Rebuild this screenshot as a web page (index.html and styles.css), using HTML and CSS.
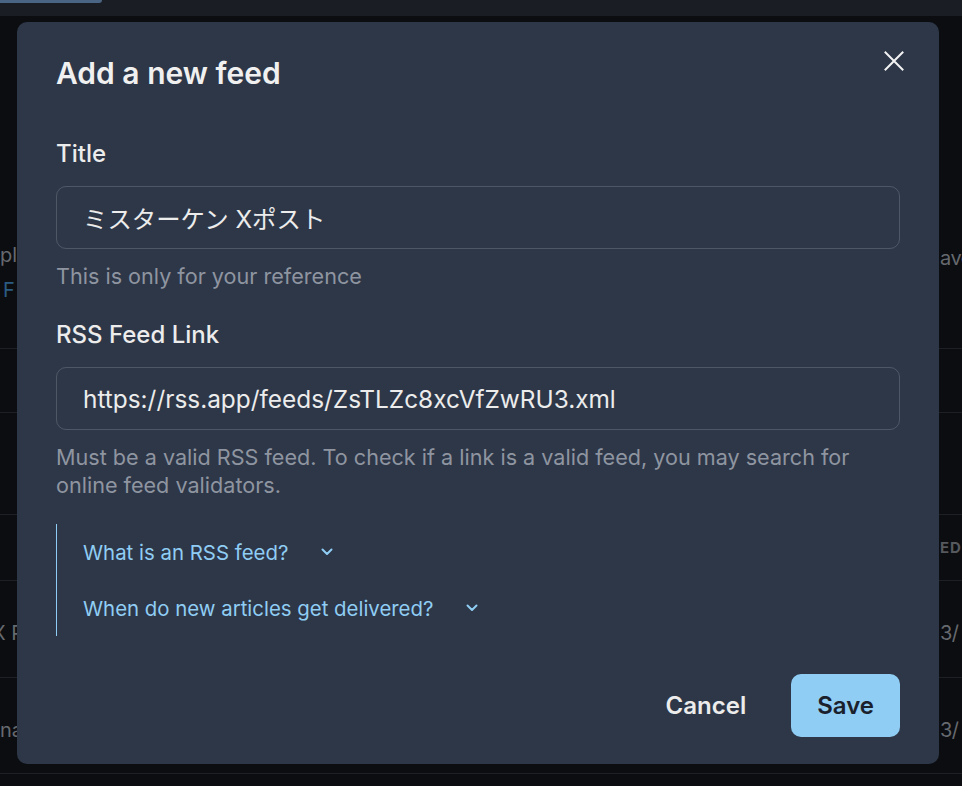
FILE: index.html
```html
<!DOCTYPE html>
<html lang="en">
<head>
<meta charset="utf-8">
<title>Add a new feed</title>
<link rel="stylesheet" href="styles.css">
</head>
<body>
<div class="page">
  <div class="top-strip"><div class="top-btn"></div></div>
  <div class="row row-1">
    <div class="cell-l"><div class="bg-line">pl</div><div class="bg-line bg-link">F</div></div>
    <div></div>
    <div class="cell-r"><div class="bg-line">ave</div></div>
  </div>
  <div class="row row-2"><div></div><div></div><div></div></div>
  <div class="row row-3"><div></div><div></div><div></div></div>
  <div class="row row-4"><div></div><div></div><div class="cell-r bg-head">ED</div></div>
  <div class="row row-5"><div class="cell-l shift">X P</div><div></div><div class="cell-r">3/</div></div>
  <div class="row row-6"><div class="cell-l">na</div><div></div><div class="cell-r">3/</div></div>
</div>

<div class="modal" role="dialog" aria-labelledby="modal-title">
  <button class="close-btn" aria-label="Close">
    <svg width="20" height="20" viewBox="0 0 20 20" fill="none" stroke="currentColor" stroke-width="2" stroke-linecap="square">
      <path d="M1.5 1.5 L18.5 18.5 M18.5 1.5 L1.5 18.5"/>
    </svg>
  </button>
  <h2 class="modal-title" id="modal-title">Add a new feed</h2>
  <div class="modal-body">
    <div class="field">
      <label class="field-label">Title</label>
      <div class="input">ミスターケン Xポスト</div>
      <div class="helper">This is only for your reference</div>
    </div>
    <div class="field field-2">
      <label class="field-label">RSS Feed Link</label>
      <div class="input">https://rss.app/feeds/ZsTLZc8xcVfZwRU3.xml</div>
      <div class="helper">Must be a valid RSS feed. To check if a link is a valid feed, you may search for online feed validators.</div>
    </div>
    <div class="accordion">
      <div class="acc-item">What is an RSS feed?
        <svg class="chev" width="12" height="8" viewBox="0 0 12 8" fill="none" stroke="currentColor" stroke-width="2" stroke-linecap="round" stroke-linejoin="round"><path d="M1.5 1.5 L6 6 L10.5 1.5"/></svg>
      </div>
      <div class="acc-item">When do new articles get delivered?
        <svg class="chev" width="12" height="8" viewBox="0 0 12 8" fill="none" stroke="currentColor" stroke-width="2" stroke-linecap="round" stroke-linejoin="round"><path d="M1.5 1.5 L6 6 L10.5 1.5"/></svg>
      </div>
    </div>
  </div>
  <div class="modal-footer">
    <button class="btn btn-ghost">Cancel</button>
    <button class="btn btn-primary">Save</button>
  </div>
</div>
</body>
</html>
```
FILE: styles.css
```css
html, body {
  margin: 0;
  padding: 0;
}
body {
  background: #0b0d11;
  font-family: Inter, "Noto Sans", "Noto Sans CJK JP", sans-serif;
  width: 962px;
  height: 786px;
  overflow: hidden;
}
.page {
  width: 962px;
  height: 786px;
  color: #66696e;
  font-size: 20px;
}
.top-strip {
  height: 16px;
  background: #1a1d23;
}
.top-btn {
  width: 102px;
  height: 3px;
  background: #4a6583;
  border-radius: 0 0 6px 0;
}
.row {
  display: grid;
  grid-template-columns: 17px 922px 23px;
  align-items: center;
  border-bottom: 1px solid #1c1f26;
  box-sizing: border-box;
}
.cell-l, .cell-r {
  overflow: hidden;
  white-space: nowrap;
}
.cell-r { padding-left: 1px; letter-spacing: -0.5px; }
.bg-line { line-height: 35px; }
.bg-link { color: #2b5c82; padding-left: 3px; }
.bg-head { font-size: 15px; font-weight: 700; letter-spacing: 1px; color: #55585d; }
.shift { text-indent: -8px; }
.row-1 { height: 333px; align-items: start; padding-top: 222px; }
.row-1 .cell-r { padding-top: 3px; }
.row-2 { height: 64px; }
.row-3 { height: 102px; }
.row-4 { height: 66px; }
.row-5 { height: 97px; padding-top: 8px; }
.row-6 { height: 96px; padding-top: 9px; }

.modal {
  position: fixed;
  left: 17px;
  top: 22px;
  width: 922px;
  height: 742px;
  box-sizing: border-box;
  background: #2d3748;
  border-radius: 10px;
  padding: 0 39px 27px;
  display: flex;
  flex-direction: column;
  color: #ececec;
}
.close-btn {
  position: absolute;
  top: 19px;
  right: 25px;
  width: 40px;
  height: 40px;
  padding: 0;
  border: 0;
  background: transparent;
  color: #f2f2f2;
  display: flex;
  align-items: center;
  justify-content: center;
}
.modal-title {
  margin: 0;
  padding-top: 32px;
  font-size: 30px;
  font-weight: 600;
  line-height: 38px;
  color: #f0f0f0;
}
.modal-body {
  margin-top: 46px;
  display: flex;
  flex-direction: column;
}
.field {
  display: flex;
  flex-direction: column;
}
.field-2 { margin-top: 29px; }
.field-label {
  font-size: 24px;
  font-weight: 500;
  line-height: 32px;
  margin-bottom: 16px;
}
.input {
  height: 63px;
  box-sizing: border-box;
  border: 1px solid rgba(255, 255, 255, 0.16);
  border-radius: 10px;
  padding: 0 26px;
  font-size: 24.4px;
  display: flex;
  align-items: center;
  color: #ececec;
}
.helper {
  margin-top: 13px;
  font-size: 21.6px;
  line-height: 28px;
  color: #8f95a0;
}
.accordion {
  margin-top: 25px;
  border-left: 1px solid #90cdf4;
}
.acc-item {
  height: 56px;
  display: flex;
  align-items: center;
  padding-left: 26px;
  color: #90cdf4;
  font-size: 20.4px;
}
.chev { margin-left: 33px; }
.modal-footer {
  margin-top: auto;
  display: flex;
  justify-content: flex-end;
  gap: 19px;
}
.btn {
  height: 63px;
  padding: 0 26px;
  border: 0;
  border-radius: 10px;
  font-family: inherit;
  font-size: 24px;
  font-weight: 600;
}
.btn-ghost {
  background: transparent;
  color: #ececec;
}
.btn-primary {
  background: #90cdf4;
  color: #1a202c;
}
```
